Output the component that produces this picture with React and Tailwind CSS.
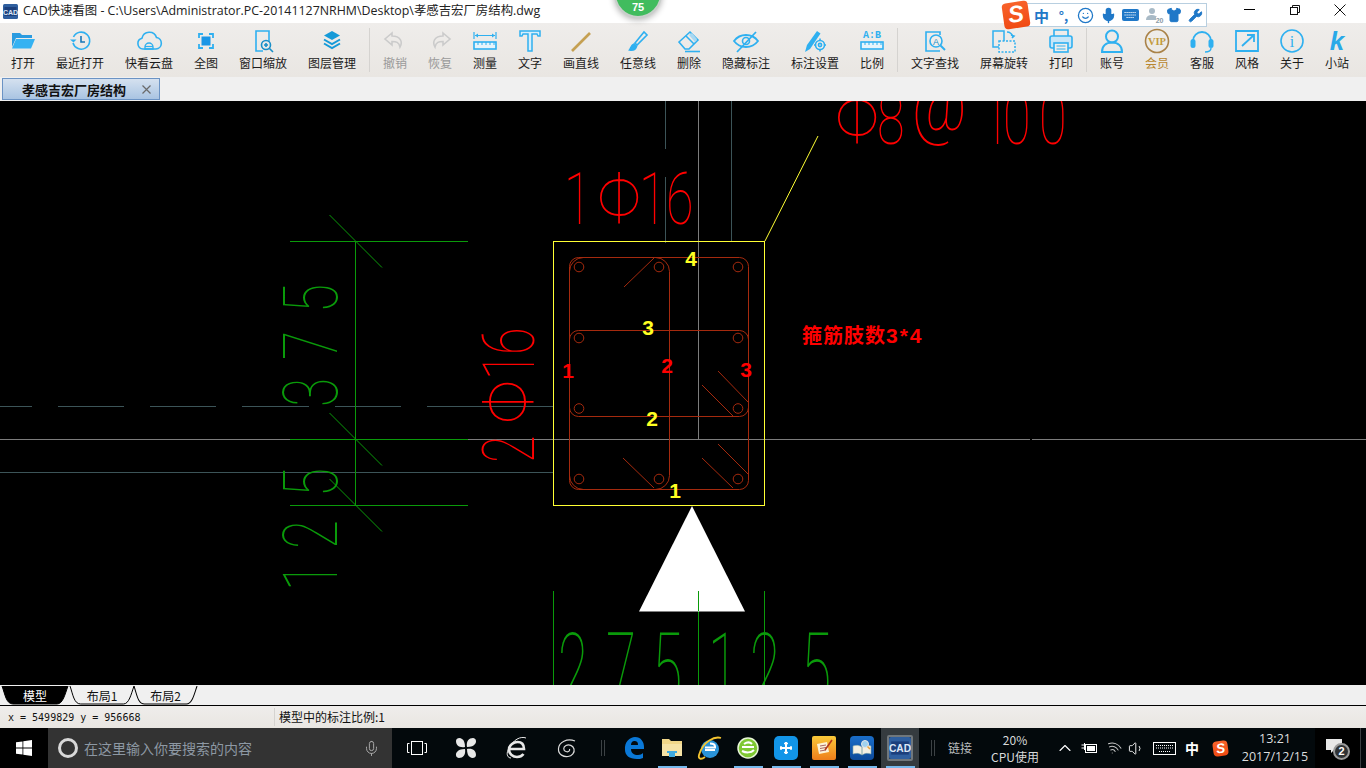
import { Mic, Smile, Shirt, Wrench, Wifi, Volume1, ChevronUp } from 'lucide-react';

const BLUE = '#2fb0f0';

// toolbar icons, all drawn on a 28x28 box
const Ico = ({ children }) => (
  <svg width="28" height="28" viewBox="0 0 28 28" fill="none" stroke={BLUE} strokeWidth="1.6">
    {children}
  </svg>
);

const icons = {
  open: (
    <Ico>
      <path d="M3 6h8l2 2h10v3H7l-4 9z" fill="#2a9be0" stroke="none" />
      <path d="M7 12h19l-4 9.500H3z" fill="#35b2f2" stroke="none" />
    </Ico>
  ),
  recent: (
    <Ico>
      <path d="M7.500 10a8.500 8.500 0 1 1-.5 6" />
      <path d="M4 12.500l3.500 3 3-3" fill={BLUE} stroke="none" />
      <path d="M15 9v6h4" stroke="#1877b8" />
    </Ico>
  ),
  cloud: (
    <Ico>
      <path d="M8 22a5.500 5.500 0 0 1-1-10.800 7.500 7.500 0 0 1 14.500-.7A5.800 5.800 0 0 1 21 22z" />
      <path d="M10 22v-2a4 4 0 0 1 8 0v2z" strokeWidth="1.4" />
      <path d="M10 19.500h8" strokeWidth="1.2" />
    </Ico>
  ),
  full: (
    <Ico>
      <path d="M7 11V7h4M17 7h4v4M21 17v4h-4M11 21H7v-4" strokeWidth="1.8" />
      <rect x="9.500" y="9.500" width="9" height="9" fill="#1a96e6" stroke="none" />
    </Ico>
  ),
  zoom: (
    <Ico>
      <path d="M20 14V4H7v20h7" strokeWidth="1.600" />
      <circle cx="17" cy="18" r="4.500" stroke="#1a8fc8" />
      <path d="M20.500 21.500L24 25M15 18h4M17 16v4" stroke="#1a8fc8" />
    </Ico>
  ),
  layers: (
    <Ico>
      <path d="M14 4l8 4.500-8 4.500-8-4.500z" fill="#159ad8" stroke="none" />
      <path d="M6 12.500l8 4.500 8-4.500M6 16.500l8 4.500 8-4.500" stroke="#159ad8" strokeWidth="2" />
    </Ico>
  ),
  undo: (
    <Ico>
      <path d="M11 6L4 12l7 6v-3.500c4 0 7 .5 8 5.500 3-5 .5-11-8-11z" stroke="#cbcbcb" />
    </Ico>
  ),
  redo: (
    <Ico>
      <path d="M17 6l7 6-7 6v-3.500c-4 0-7 .5-8 5.500-3-5-.5-11 8-11z" stroke="#cbcbcb" />
    </Ico>
  ),
  measure: (
    <Ico>
      <path d="M3 5v7M25 5v7M4 8.500h20" strokeWidth="1.200" />
      <path d="M4 8.500l3-2v4zM24 8.500l-3-2v4z" fill={BLUE} stroke="none" />
      <rect x="3" y="15" width="22" height="7" fill="#e6f4fb" />
      <path d="M7 15v3M11 15v3M15 15v3M19 15v3M23 15v3" strokeWidth="1" />
    </Ico>
  ),
  text: (
    <Ico>
      <path d="M4 9V4h20v5h-2l-1-2h-5v17h-4V7H7l-1 2z" strokeWidth="1.500" fill="#d6eefb" />
    </Ico>
  ),
  line: (
    <Ico>
      <path d="M5 24L23 6" stroke="#c5a052" strokeWidth="2.600" />
    </Ico>
  ),
  brush: (
    <Ico>
      <path d="M11 16l9-11 3 3-10 10z" />
      <path d="M10 17c-3 1-3 4-4.500 6 3 .5 6 0 7-3.500z" fill={BLUE} />
    </Ico>
  ),
  eraser: (
    <Ico>
      <path d="M4 15L15 5l8 8-9 9h-4z" />
      <path d="M11 9l8 8" />
      <path d="M14 8l3-2 5 6-2 3z" fill="#a8d8f2" stroke="none" />
      <path d="M10 24.500h15" />
    </Ico>
  ),
  eye: (
    <Ico>
      <path d="M2 14c6-8 18-8 24 0-6 8-18 8-24 0z" strokeWidth="1.800" />
      <circle cx="14" cy="14" r="3.500" />
      <path d="M5 25L24 5" strokeWidth="1.800" />
    </Ico>
  ),
  mark: (
    <Ico>
      <path d="M4 25l2-7L16 4l3.500 2.500L9 22z" fill={BLUE} stroke="none" />
      <circle cx="19" cy="18" r="4.500" fill="#f0eeeb" />
      <circle cx="19" cy="18" r="1.600" />
      <path d="M19 11.500v2M19 22.500v2M13 18h1.500M23.500 18H25" />
    </Ico>
  ),
  scale: (
    <Ico>
      <text x="14" y="11" textAnchor="middle" fontSize="10" fontWeight="700" fontFamily="Liberation Mono, monospace" fill={BLUE} stroke="none">A:B</text>
      <rect x="3" y="15" width="22" height="7" fill="#e6f4fb" />
      <path d="M7 15v3M11 15v3M15 15v3M19 15v3M23 15v3" strokeWidth="1" />
    </Ico>
  ),
  find: (
    <Ico>
      <path d="M19 8V5H5v19h14" />
      <circle cx="15" cy="14" r="6" fill="#f0eeeb" />
      <path d="M19.500 18.500L24 23" strokeWidth="2" />
      <text x="15" y="17.500" textAnchor="middle" fontSize="9" fontFamily="Liberation Sans, sans-serif" fill="#1a8fc8" stroke="none">A</text>
    </Ico>
  ),
  rotate: (
    <Ico>
      <rect x="3" y="4" width="11" height="16" strokeWidth="1.500" />
      <rect x="9" y="14" width="16" height="11" fill="#f0eeeb" strokeDasharray="2 1.500" strokeWidth="1.500" />
      <path d="M17 5c3 0 5 2 6 5M22 11l2-2-3-1" />
    </Ico>
  ),
  print: (
    <Ico>
      <path d="M7 9V3h14v6" />
      <rect x="3" y="9" width="22" height="12" rx="2" fill="#c7e6f8" />
      <rect x="7" y="16" width="14" height="9" fill="#f0eeeb" />
      <path d="M9.500 19h9M9.500 22h9" strokeWidth="1" />
    </Ico>
  ),
  user: (
    <Ico>
      <circle cx="14" cy="9.500" r="6" strokeWidth="2" />
      <path d="M4 25c0-6 4-9.500 10-9.500S24 19 24 25z" strokeWidth="2" />
    </Ico>
  ),
  vip: (
    <Ico>
      <circle cx="14" cy="14" r="11.500" stroke="#a98248" strokeWidth="1.600" />
      <text x="14" y="17.500" textAnchor="middle" fontSize="10.500" fontWeight="700" fontFamily="Liberation Serif, serif" fill="#c39a3c" stroke="none">VIP</text>
    </Ico>
  ),
  service: (
    <Ico>
      <path d="M5 14a9 9 0 0 1 18 0" strokeWidth="1.800" />
      <rect x="2.500" y="12" width="5" height="9" rx="2.500" fill={BLUE} stroke="none" />
      <rect x="20.500" y="12" width="5" height="9" rx="2.500" fill={BLUE} stroke="none" />
      <path d="M23 21c0 3-3 4-6 4" strokeWidth="1.400" />
    </Ico>
  ),
  style: (
    <Ico>
      <path d="M3 4h22v20H3z" strokeWidth="1.800" />
      <path d="M9 19L21 8M14 8h7v7" strokeWidth="1.800" />
    </Ico>
  ),
  about: (
    <Ico>
      <circle cx="14" cy="14" r="11" />
      <text x="14" y="20" textAnchor="middle" fontSize="16" fontFamily="Liberation Serif, serif" fill={BLUE} stroke="none">i</text>
    </Ico>
  ),
  site: (
    <Ico>
      <text x="14" y="23" textAnchor="middle" fontSize="26" fontWeight="700" fontStyle="italic" fontFamily="Liberation Sans, sans-serif" fill="#29a9e8" stroke="none">k</text>
    </Ico>
  ),
};

const tools = [
  ['open', '打开', 'w-[45px]'],
  ['recent', '最近打开', 'w-[69px]'],
  ['cloud', '快看云盘', 'w-[69px]'],
  ['full', '全图', 'w-[45px]'],
  ['zoom', '窗口缩放', 'w-[69px]'],
  ['layers', '图层管理', 'w-[69px]'],
  'sep',
  ['undo', '撤销', 'w-[45px]', 'text-[#9a9a9a]'],
  ['redo', '恢复', 'w-[45px]', 'text-[#9a9a9a]'],
  ['measure', '测量', 'w-[45px]'],
  ['text', '文字', 'w-[45px]'],
  ['line', '画直线', 'w-[57px]'],
  ['brush', '任意线', 'w-[57px]'],
  ['eraser', '删除', 'w-[45px]'],
  ['eye', '隐藏标注', 'w-[69px]'],
  ['mark', '标注设置', 'w-[69px]'],
  ['scale', '比例', 'w-[45px]'],
  'sep',
  ['find', '文字查找', 'w-[69px]'],
  ['rotate', '屏幕旋转', 'w-[69px]'],
  ['print', '打印', 'w-[45px]'],
  'sep',
  ['user', '账号', 'w-[45px]'],
  ['vip', '会员', 'w-[45px]', 'text-[#b8862e]'],
  ['service', '客服', 'w-[45px]'],
  ['style', '风格', 'w-[45px]'],
  ['about', '关于', 'w-[45px]'],
  ['site', '小站', 'w-[45px]'],
];

const cjk = { fontFamily: '"Noto Sans CJK SC", "Noto Sans", sans-serif' };

function AppIcon({ size = 15 }) {
  return (
    <svg width={size} height={size} viewBox="0 0 15 15">
      <rect width="15" height="15" rx="1.500" fill="#2f5f9f" />
      <rect x="1.500" y="3" width="12" height="9" fill="#1c3f7c" />
      <text x="7.500" y="10.500" textAnchor="middle" fontSize="7" fontWeight="700" fontFamily="Liberation Sans, sans-serif" fill="#dce8f6">CAD</text>
    </svg>
  );
}

function TitleBar() {
  return (
    <div className="h-[23px] bg-white flex items-center text-[#222]">
      <div className="w-[23px] pl-[3px] flex"><AppIcon /></div>
      <span className="text-[12.4px] whitespace-nowrap" style={{ fontFamily: '"Open Sans", "Noto Sans CJK SC", sans-serif' }}>
        CAD快速看图 - C:\Users\Administrator.PC-20141127NRHM\Desktop\孝感吉宏厂房结构.dwg
      </span>
      <div className="ml-auto flex items-center h-full pr-[4px]">
        <div className="w-[45px] flex justify-center"><div className="w-[11px] h-px bg-black mt-[-3px]" /></div>
        <div className="w-[45px] flex justify-center">
          <svg width="12" height="12" viewBox="0 0 12 12" fill="none" stroke="#111" className="mt-[-4px]">
            <rect x="1.500" y="3.500" width="7" height="7" />
            <path d="M3.500 3.500v-2h7v7h-2" />
          </svg>
        </div>
        <div className="w-[45px] flex justify-center">
          <svg width="12" height="12" viewBox="0 0 12 12" stroke="#111" className="mt-[-4px]">
            <path d="M.5.500l11 11M11.500.500l-11 11" />
          </svg>
        </div>
      </div>
    </div>
  );
}

function Toolbar() {
  return (
    <div className="h-[54px] flex bg-gradient-to-b from-[#efedeb] to-[#e9e6e2] pl-[0.5px]">
      {tools.map((t, i) =>
        t === 'sep' ? (
          <div key={i} className="w-[6px] flex justify-center pt-[5px] pb-[5px]">
            <div className="w-px bg-[#d5d3d0]" />
          </div>
        ) : (
          <div key={i} className={`${t[2]} flex flex-col items-center pt-[4px] shrink-0`}>
            <div className="h-[28px] flex">{icons[t[0]]}</div>
            <span className={`text-[12px] leading-[16px] whitespace-nowrap ${t[3] || 'text-[#1c1c1c]'}`} style={cjk}>{t[1]}</span>
          </div>
        )
      )}
    </div>
  );
}

function DocTabs() {
  return (
    <div className="h-[24px] bg-[#f0f0f0] pl-[2px] pt-[1px]">
      <div className="w-[158px] h-[22px] border border-[#6b93c4] bg-gradient-to-b from-[#d5e1ef] to-[#a9c4e2] flex items-center pl-[19px]">
        <span className="text-[13px] font-bold text-[#111] leading-none" style={cjk}>孝感吉宏厂房结构</span>
        <svg width="9" height="9" viewBox="0 0 9 9" stroke="#6a6a6a" strokeWidth="1.200" className="ml-[16px]">
          <path d="M.5.500l8 8M8.500.500l-8 8" />
        </svg>
      </div>
    </div>
  );
}

// big thin drawing text of the cad file, xs = where each glyph starts
function CadText({ x, y, rot = 0, sx = 0.7, size = 76, color, xs, children }) {
  return (
    <g transform={`translate(${x} ${y}) rotate(${rot}) scale(${sx} 1)`}>
      <text
        x={xs.map((v) => v / sx).join(' ')}
        y="0"
        fontSize={size}
        fontWeight="100"
        fontFamily="Roboto, sans-serif"
        fill={color}
      >
        {children}
      </text>
    </g>
  );
}

const labels = [
  ['4', 691, 266, '#ffff22'],
  ['3', 648, 335, '#ffff22'],
  ['2', 652, 426, '#ffff22'],
  ['1', 675, 498, '#ffff22'],
  ['1', 568, 378, '#ff0000'],
  ['2', 667, 373, '#ff0000'],
  ['3', 746, 377, '#ff0000'],
];

const RED = '#ff0000';
const GREEN = '#0a9a0a';
const TEAL = '#3c5458';
const GREY = '#7c7c7c';
const BAR = '#a52a0e';

const hooks = [
  [624, 287, 654, 258], [718, 371, 748, 402], [702, 385, 733, 416],
  [623, 458, 654, 488], [702, 458, 733, 488], [718, 444, 748, 474],
];
const rebars = [
  [579, 267], [659, 267], [738, 267], [579, 338], [738, 338],
  [579, 408.5], [738, 408.5], [579, 479], [659, 479], [738, 479],
];
const ticks = [215, 413, 479];

function Drawing() {
  return (
    <svg className="block bg-black" width="1366" height="584" viewBox="0 101 1366 584" fill="none">
      <g shapeRendering="crispEdges">
        {/* axis lines */}
        <path d="M665.500 101v48M665.500 177v66M731.500 101v141" stroke={TEAL} />
        <path d="M0 406.500h32M58 406.500h66M150 406.500h66M242 406.500h67M335 406.500h66M427 406.500h126M0 472.500h553" stroke={TEAL} />
        <path d="M698.500 101v338M0 439.500h1030M1032 439.500h334" stroke={GREY} />
        {/* dimension lines */}
        <path d="M290 241.500h178M290 439.500h178M290 505.500h178M355.500 241v264" stroke={GREEN} />
        <path d="M553.500 591v94M698.500 591v94M764.500 591v94" stroke={GREEN} />
        {/* column outline */}
        <rect x="553.500" y="241.500" width="211" height="264" stroke="#ffff33" />
      </g>
      {ticks.map((t) => (
        <path key={t} d={`M329.500 ${t}l52.500 52.500`} stroke={GREEN} />
      ))}
      <path d="M765 241L818 136" stroke="#ffff33" />

      {/* stirrups and rebars */}
      <rect x="569.500" y="257.500" width="179" height="232" rx="9" stroke={BAR} />
      <rect x="569.500" y="257.500" width="100" height="232" rx="14" stroke={BAR} />
      <rect x="569.500" y="330.500" width="179" height="86" rx="9" stroke={BAR} />
      {rebars.map(([cx, cy]) => (
        <circle key={`${cx}-${cy}`} cx={cx} cy={cy} r="4.800" stroke={BAR} />
      ))}
      {hooks.map(([a, b, c, d]) => (
        <path key={`${a}-${b}`} d={`M${a} ${b}L${c} ${d}`} stroke={BAR} />
      ))}

      {/* section arrow */}
      <path d="M692 506L745 611.500H639z" fill="#fff" />
      <path d="M698.500 591v20" stroke={GREEN} shapeRendering="crispEdges" />

      <CadText x={337} y={405} rot={-90} color={GREEN} xs={[-2, 45, 92]}>375</CadText>
      <CadText x={337} y={585} rot={-90} color={GREEN} xs={[-6, 36, 88]}>125</CadText>
      <CadText x={534} y={462} rot={-90} color={RED} xs={[-1]} size={72}>2</CadText>
      <CadText x={534} y={462} rot={-90} color={RED} sx={0.86} xs={[38]} size={72}>Φ</CadText>
      <CadText x={534} y={462} rot={-90} color={RED} xs={[82, 107]} size={72}>16</CadText>
      <CadText x={0} y={224} color={RED} xs={[564]} size={72}>1</CadText>
      <CadText x={0} y={224} color={RED} sx={0.86} xs={[597]} size={72}>Φ</CadText>
      <CadText x={0} y={224} color={RED} xs={[639, 666]} size={72}>16</CadText>
      <CadText x={0} y={144} color={RED} sx={0.86} xs={[835]} size={72}>Φ</CadText>
      <CadText x={0} y={144} color={RED} xs={[877]} size={72}>8</CadText>
      <CadText x={0} y={130} color={RED} sx={0.82} xs={[912]} size={72}>@</CadText>
      <CadText x={0} y={144} color={RED} xs={[982, 1003, 1039]} size={72}>100</CadText>
      <CadText x={0} y={704} color={GREEN} sx={0.55} size={100} xs={[558, 606, 652, 708, 750, 801]}>275125</CadText>

      {labels.map(([t, x, y, c], i) => (
        <text key={i} x={x} y={y} textAnchor="middle" fontSize="21" fontWeight="700" fontFamily="Liberation Sans, sans-serif" fill={c}>
          {t}
        </text>
      ))}
      <text x="802" y="343" fontSize="20" fontWeight="700" letterSpacing="1" fontFamily='"Noto Sans CJK SC", sans-serif' fill={RED}>
        箍筋肢数<tspan fontSize="21" letterSpacing="2" fontFamily="Liberation Sans, sans-serif">3*4</tspan>
      </text>
    </svg>
  );
}

function LayoutTab({ label, active, w, extra }) {
  return (
    <div className={`relative h-[19px] ${w} ${extra || ''} flex items-center justify-center`}>
      <svg className="absolute inset-0" width="100%" height="19" viewBox="0 0 68 19" preserveAspectRatio="none">
        <path
          d="M1 0C4 8 5 18 12 18H56C62 18 64 8 67 0"
          fill={active ? '#000' : 'none'}
          stroke="#000"
          vectorEffect="non-scaling-stroke"
        />
      </svg>
      <span className={`relative text-[12px] leading-none ${active ? 'text-white' : 'text-[#111]'}`} style={cjk}>{label}</span>
    </div>
  );
}

function BottomBars() {
  return (
    <>
      <div className="h-[21px] bg-[#f0f0f0] border-b border-black flex items-start pl-[1px] pt-px">
        <LayoutTab label="模型" active w="w-[68px]" />
        <LayoutTab label="布局1" w="w-[66px]" extra="-mr-[2px]" />
        <LayoutTab label="布局2" w="w-[65px]" />
      </div>
      <div className="h-[22px] bg-gradient-to-b from-[#efedeb] to-[#e9e6e2] flex items-center">
        <span className="w-[274px] pl-[8px] text-[10px] text-[#111]" style={{ fontFamily: '"DejaVu Sans Mono", monospace' }}>
          x = 5499829 y = 956668
        </span>
        <div className="w-px h-[18px] bg-[#d5d3d0]" />
        <span className="pl-[4px] text-[12px] text-[#111]" style={cjk}>模型中的标注比例:1</span>
      </div>
    </>
  );
}

const Slot = ({ w, on, active, extra, children }) => (
  <div className={`${w} h-full relative flex items-center justify-center shrink-0 ${active ? 'bg-[#353b3f]' : ''} ${extra || ''}`}>
    {children}
    {on && <div className="absolute bottom-0 left-[5px] right-[4px] h-[2px] bg-[#76b9ed]" />}
  </div>
);

const Sep = () => (
  <div className="flex gap-[2px] h-[16px]">
    <div className="w-px bg-[#3c4245]" />
    <div className="w-px bg-[#3c4245]" />
  </div>
);

function SogouMark({ size = 26 }) {
  return (
    <div
      className="rotate-[-8deg] rounded-[4px] bg-gradient-to-b from-[#f8622a] to-[#f04a12] flex items-center justify-center"
      style={{ width: size, height: size }}
    >
      <span
        className="text-white font-bold italic leading-none"
        style={{ fontSize: size * 0.9, fontFamily: 'Liberation Sans, sans-serif' }}
      >
        S
      </span>
    </div>
  );
}

function SogouBar() {
  return (
    <div className="absolute left-[1021px] top-[3px] w-[186px] h-[24px] bg-white border border-[#b8cfe0] flex items-center pl-[12px] gap-[5.500px] text-[#1f78c8]">
      <div className="absolute left-[-19px] top-[-2px]"><SogouMark /></div>
      <span className="text-[15px] font-bold leading-none w-[16px]" style={cjk}>中</span>
      <span className="text-[13px] font-bold leading-none w-[16px] text-center" style={cjk}>°,</span>
      <Smile size={17} strokeWidth={1.8} />
      <Mic size={17} strokeWidth={2} fill="#1f78c8" />
      <svg width="17" height="12" viewBox="0 0 17 12">
        <rect width="17" height="12" rx="2" fill="#1f78c8" />
        <path d="M2.500 3.500h12M2.500 6h12M4.500 8.500h8" stroke="#fff" strokeDasharray="1.200 .8" />
      </svg>
      <div className="relative w-[16px] h-[16px]">
        <svg width="16" height="16" viewBox="0 0 16 16" fill="#a9bac6">
          <circle cx="7" cy="4" r="3" />
          <path d="M1 13c0-4 3-5 6-5s4 1 5 2v3z" />
        </svg>
        <span className="absolute right-[-3px] bottom-[-1px] text-[7px] font-bold leading-none text-[#8b9aa5] bg-white" style={{ fontFamily: 'Liberation Sans, sans-serif' }}>20</span>
      </div>
      <Shirt size={16} fill="#1f78c8" strokeWidth={1.500} />
      <Wrench size={15} fill="#1f78c8" strokeWidth={1.500} />
    </div>
  );
}

function Taskbar() {
  const sys = { fontFamily: '"Noto Sans CJK SC", "Noto Sans", sans-serif' };
  return (
    <div className="h-[40px] bg-[#03090c] flex items-stretch text-[#e6e6e6]">
      <div className="w-[48px] bg-black flex items-center justify-center">
        <svg width="16" height="16" viewBox="0 0 16 16" fill="#fff">
          <path d="M0 2.300l6.500-.9v6.200H0zM7.300 1.300L16 0v7.600H7.300zM0 8.400h6.500v6.200L0 13.700zM7.300 8.400H16V16l-8.700-1.300z" />
        </svg>
      </div>
      <div className="w-[344px] bg-[#333] flex items-center pl-[10px]">
        <div className="w-[20px] h-[20px] rounded-full border-[3px] border-[#d8d8d8]" />
        <span className="ml-[6px] text-[14px] text-[#8d98a3] leading-none" style={sys}>在这里输入你要搜索的内容</span>
        <Mic size={17} strokeWidth={1.400} className="ml-auto mr-[12px] text-[#a8a8a8]" />
      </div>
      <Slot w="w-[49px]">
        <svg width="20" height="14" viewBox="0 0 20 14" fill="none" stroke="#fff">
          <rect x="4.500" y=".5" width="11" height="13" />
          <path d="M2.500 2.500H.5v9h2M17.500 2.500h2v9h-2" />
        </svg>
      </Slot>
      <Slot w="w-[50px]">
        <svg width="22" height="22" viewBox="0 0 22 22" fill="#e8e8e8">
          <path d="M10 10C4 11 1 8 1 4c0-3 4-4 6-2 2 1 3 4 3 8zM12 10c-1-6 2-9 6-9 3 0 4 4 2 6-1 2-4 3-8 3zM12 12c6-1 9 2 9 6 0 3-4 4-6 2-2-1-3-4-3-8zM10 12c1 6-2 9-6 9-3 0-4-4-2-6 1-2 4-3 8-3z" />
        </svg>
      </Slot>
      <Slot w="w-[52px]">
        <svg width="24" height="24" viewBox="0 0 24 24" fill="none" stroke="#e8e8e8" strokeWidth="2.600">
          <path d="M5 13h14c0-5-3-7-6.500-7S4 9 4 13.500 8 21 12 21c3 0 5-1 6.500-3" />
          <path d="M21 2C16 0 8 3 3 14c-2 5 0 8 3 8" strokeWidth="1" />
        </svg>
      </Slot>
      <Slot w="w-[48px]">
        <svg width="20" height="20" viewBox="0 0 20 20" fill="none" stroke="#dcdcdc" strokeWidth="1.200">
          <path d="M18 3C10 0 2 4 1.500 10.500S7 19 11 18.500s7-4 6-7.500-5-5-8-3.500-3 5 0 6 4-1 3.500-2.500" />
        </svg>
      </Slot>
      <Slot w="w-[24px]"><Sep /></Slot>
      <Slot w="w-[38px]">
        <svg width="22" height="24" viewBox="0 0 22 24">
          <path d="M2 14C1 6 7 1 12 1c6 0 9 5 9 10v2H8c0 4 3 6 7 6 2 0 4-1 5-2v5c-2 1-4 1-6 1C6 23 2 19 2 14zM8 9h7c0-3-1-4-3.500-4S8 7 8 9z" fill="#0a78d7" />
        </svg>
      </Slot>
      <Slot w="w-[38px]" on>
        <svg width="22" height="20" viewBox="0 0 22 20">
          <path d="M1 1h7l2 2h11v15H1z" fill="#f1d789" />
          <path d="M1 6h20v12H1z" fill="#f6e3a6" />
          <path d="M6 13h10v2h-2v4H8v-4H6z" fill="#3fa9df" />
        </svg>
      </Slot>
      <Slot w="w-[38px]">
        <svg width="26" height="26" viewBox="0 0 26 26" fill="none">
          <circle cx="13" cy="14" r="9" fill="#2a93d8" />
          <path d="M8 12.500h10v-1c0-2-2-3-5-3M8 15h10" stroke="#fff" strokeWidth="2" />
          <path d="M24 3C18 1 6 6 2 20c-1 4 2 5 6 2" stroke="#f4c430" strokeWidth="1.800" />
        </svg>
      </Slot>
      <Slot w="w-[38px]" on>
        <svg width="24" height="24" viewBox="0 0 24 24" fill="none">
          <circle cx="12" cy="12" r="10" fill="#7ec832" stroke="#e8f6d8" strokeWidth="1.500" />
          <path d="M6 11h12M6 15c4 2 9 2 12-1M8 8c3-2 6-2 8 0" stroke="#fff" strokeWidth="2" />
        </svg>
      </Slot>
      <Slot w="w-[38px]" on>
        <div className="w-[24px] h-[24px] rounded-[5px] bg-[#1295e8] flex items-center justify-center">
          <svg width="16" height="16" viewBox="0 0 16 16" fill="none" stroke="#fff" strokeWidth="2">
            <path d="M8 2v12M2 8h12" />
            <path d="M6 3.500h4M3 6v4M13 6v4M6 12.500h4" strokeWidth="1.400" />
          </svg>
        </div>
      </Slot>
      <Slot w="w-[38px]" on>
        <div className="w-[24px] h-[24px] rounded-[2px] bg-gradient-to-b from-[#f8c93a] to-[#ee7d1a] flex items-center justify-center">
          <svg width="18" height="18" viewBox="0 0 18 18" fill="none">
            <path d="M2 5l10-2 2 10-10 2z" fill="#fdf3d8" />
            <path d="M5 7l6-1M5 9.500l6-1M5 12l6-1" stroke="#a66" />
            <path d="M10 11l7-10" stroke="#b3361a" strokeWidth="1.600" />
          </svg>
        </div>
      </Slot>
      <Slot w="w-[38px]" on>
        <div className="w-[24px] h-[24px] rounded-[4px] bg-gradient-to-b from-[#1a6ec9] to-[#0d4a9a] flex items-center justify-center">
          <svg width="20" height="18" viewBox="0 0 20 18" fill="none">
            <path d="M1 7c3-1 6-1 9 1v8c-3-2-6-2-9-1zM19 7c-3-1-6-1-9 1v8c3-2 6-2 9-1z" fill="#f4f0e2" stroke="#8aa" strokeWidth=".6" />
            <circle cx="13" cy="5" r="3.500" fill="#9fd2ef" stroke="#e8e8e8" />
            <path d="M15.500 7.500L18 10" stroke="#e8a23a" strokeWidth="1.500" />
          </svg>
        </div>
      </Slot>
      <Slot w="w-[38px]" on active>
        <div className="border-2 border-[#70777c] rounded-[2px]"><AppIcon size={22} /></div>
      </Slot>
      <Slot w="w-[28px]"><Sep /></Slot>
      <Slot w="w-[26px]">
        <span className="text-[12px] text-[#b9bdbf] leading-none" style={sys}>链接</span>
      </Slot>
      <Slot w="w-[84px]">
        <div className="flex flex-col items-center text-[12px] leading-[17px] text-[#d8dadb]" style={sys}>
          <span>20%</span>
          <span>CPU使用</span>
        </div>
      </Slot>
      <Slot w="w-[16px]"><ChevronUp size={20} strokeWidth={1.300} className="text-white shrink-0" /></Slot>
      <Slot w="w-[32px]">
        <svg width="17" height="12" viewBox="0 0 17 12" fill="none" stroke="#fff">
          <path d="M.5 3h3M.5 6h3M3.500 1v7" />
          <rect x="4.500" y="2.500" width="11" height="8" />
          <rect x="6" y="4" width="8" height="5" fill="#fff" stroke="none" />
        </svg>
      </Slot>
      <Slot w="w-[18px]"><Wifi size={16} strokeWidth={1.400} className="text-[#c8c8c8] rotate-[20deg]" /></Slot>
      <Slot w="w-[26px]"><Volume1 size={17} strokeWidth={1.300} className="text-white" /></Slot>
      <Slot w="w-[30px]">
        <svg width="23" height="13" viewBox="0 0 23 13" fill="none" stroke="#fff">
          <rect x=".5" y=".5" width="22" height="12" />
          <path d="M3 3.500h17M3 6h17M6 9.500h11" strokeDasharray="1 1" />
        </svg>
      </Slot>
      <Slot w="w-[26px]">
        <span className="text-[14px] font-bold text-white leading-none" style={sys}>中</span>
      </Slot>
      <Slot w="w-[30px]"><SogouMark size={15} /></Slot>
      <Slot w="w-[80px]">
        <div className="flex flex-col items-center text-[12.5px] leading-[18px] text-[#dcdedf] whitespace-nowrap" style={{ fontFamily: '"Open Sans", sans-serif' }}>
          <span>13:21</span>
          <span>2017/12/15</span>
        </div>
      </Slot>
      <Slot w="w-[45px]" extra="bg-black">
        <svg width="16" height="14" viewBox="0 0 16 14" fill="#e8e8e8" className="mr-[8px] mb-[5px]">
          <path d="M0 0h16v11H8l-3 3v-3H0z" />
        </svg>
        <div className="absolute left-[18px] top-[15px] w-[17px] h-[17px] rounded-full bg-[#2f3234] border-2 border-[#9a9a9a] flex items-center justify-center">
          <span className="text-[11px] font-bold text-white leading-none" style={{ fontFamily: 'Liberation Sans, sans-serif' }}>2</span>
        </div>
      </Slot>
      <div className="w-px bg-[#3a3f42]" />
    </div>
  );
}

export default function App() {
  return (
    <div className="relative w-[1366px] h-[768px] overflow-hidden flex flex-col">
      <TitleBar />
      <Toolbar />
      <DocTabs />
      <Drawing />
      <BottomBars />
      <Taskbar />

      {/* floating score ball */}
      <div className="absolute left-[614px] top-[-30px] w-[48px] h-[48px] rounded-full bg-[#41bc5e] border-2 border-[#c9cfcb] shadow-[0_2px_6px_rgba(0,0,0,0.3)] flex items-end justify-center pb-[3px]">
        <span className="text-[11px] font-bold text-white leading-none" style={{ fontFamily: 'Liberation Sans, sans-serif' }}>75</span>
      </div>
      <SogouBar />
    </div>
  );
}
